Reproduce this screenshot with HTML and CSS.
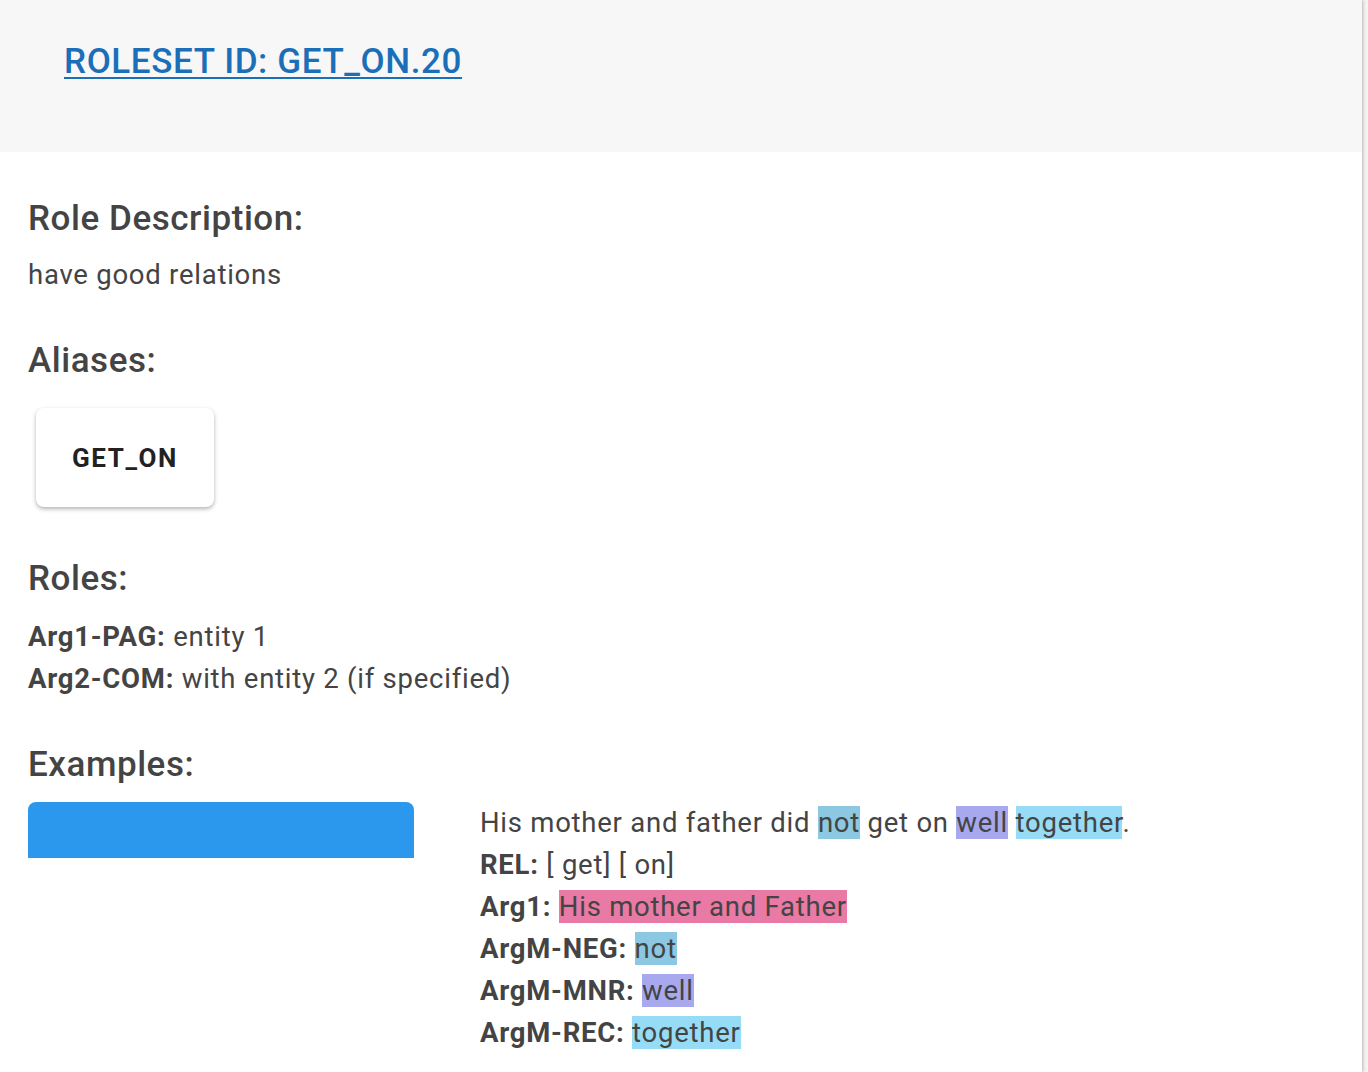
FILE: index.html
```html
<!DOCTYPE html>
<html>
<head>
<meta charset="utf-8">
<link rel="stylesheet" href="styles.css">
</head>
<body>
<div class="page">
  <header class="header">
    <a class="title" href="#">ROLESET ID: GET_ON.20</a>
  </header>
  <main class="content">
    <h2 class="heading h-desc">Role Description:</h2>
    <p class="text">have good relations</p>

    <h2 class="heading h-alias">Aliases:</h2>
    <div class="chips">
      <div class="chip">GET_ON</div>
    </div>

    <h2 class="heading h-roles">Roles:</h2>
    <div class="roles">
      <div class="line"><b>Arg1-PAG:</b> entity 1</div>
      <div class="line"><b>Arg2-COM:</b> with entity 2 (if specified)</div>
    </div>

    <h2 class="heading h-examples">Examples:</h2>
    <div class="example">
      <div class="tabbar"></div>
      <div class="example-text">
        <div class="line">His mother and father did <span class="hl-neg">not</span> get on <span class="hl-mnr">well</span> <span class="hl-rec">together</span>.</div>
        <div class="line"><b>REL:</b> [ get] [ on]</div>
        <div class="line"><b>Arg1:</b> <span class="hl-arg1">His mother and Father</span></div>
        <div class="line"><b>ArgM-NEG:</b> <span class="hl-neg">not</span></div>
        <div class="line"><b>ArgM-MNR:</b> <span class="hl-mnr">well</span></div>
        <div class="line"><b>ArgM-REC:</b> <span class="hl-rec">together</span></div>
      </div>
    </div>
  </main>
</div>
</body>
</html>
```

FILE: styles.css
```css
html, body {
  margin: 0;
  padding: 0;
}
body {
  background: #f3f3f3;
  font-family: Roboto, "Liberation Sans", sans-serif;
  color: #444;
}
.page {
  width: 1362px;
  min-height: 1072px;
  background: #fff;
  box-shadow: 1px 0 3px rgba(0,0,0,0.25);
}
.header {
  height: 152px;
  background: #f7f7f7;
  box-sizing: border-box;
  padding: 40px 0 0 64px;
}
.title {
  font-size: 35px;
  font-weight: 500;
  line-height: 44px;
  letter-spacing: 0.6px;
  color: #1a6fb8;
  text-decoration: underline;
  text-underline-offset: 4px;
  text-decoration-thickness: 2px;
}
.content {
  padding: 0 28px;
}
.heading {
  margin: 0;
  font-size: 35px;
  font-weight: 500;
  line-height: 40px;
  letter-spacing: 0.55px;
  color: #444;
}
.h-desc { padding-top: 47px; }
.h-alias { padding-top: 45px; }
.h-roles { padding-top: 52px; }
.h-examples { padding-top: 45px; }
.text {
  margin: 15px 0 0;
  font-size: 27.5px;
  line-height: 42px;
  letter-spacing: 0.75px;
}
.chips {
  display: flex;
  padding: 27px 0 0 8px;
}
.chip {
  width: 178px;
  height: 99px;
  box-sizing: border-box;
  border-radius: 8px;
  background: #fff;
  box-shadow: 0 2px 4px rgba(0,0,0,0.3);
  display: flex;
  align-items: center;
  justify-content: center;
  font-size: 26px;
  font-weight: 700;
  letter-spacing: 1.6px;
  color: #222;
}
.roles {
  padding-top: 17px;
}
.line {
  font-size: 27.5px;
  line-height: 42px;
  letter-spacing: 0.75px;
  white-space: nowrap;
}
.line b {
  font-weight: 700;
}
.example {
  display: flex;
  padding-top: 17px;
  gap: 66px;
}
.tabbar {
  width: 386px;
  height: 56px;
  background: #2b98ee;
  border-radius: 8px 8px 0 0;
  flex: none;
}
.hl-neg { background: #8dc8e3; }
.hl-mnr { background: #a8a8ef; }
.hl-rec { background: #96dcf6; }
.hl-arg1 { background: #e979a5; }
```
